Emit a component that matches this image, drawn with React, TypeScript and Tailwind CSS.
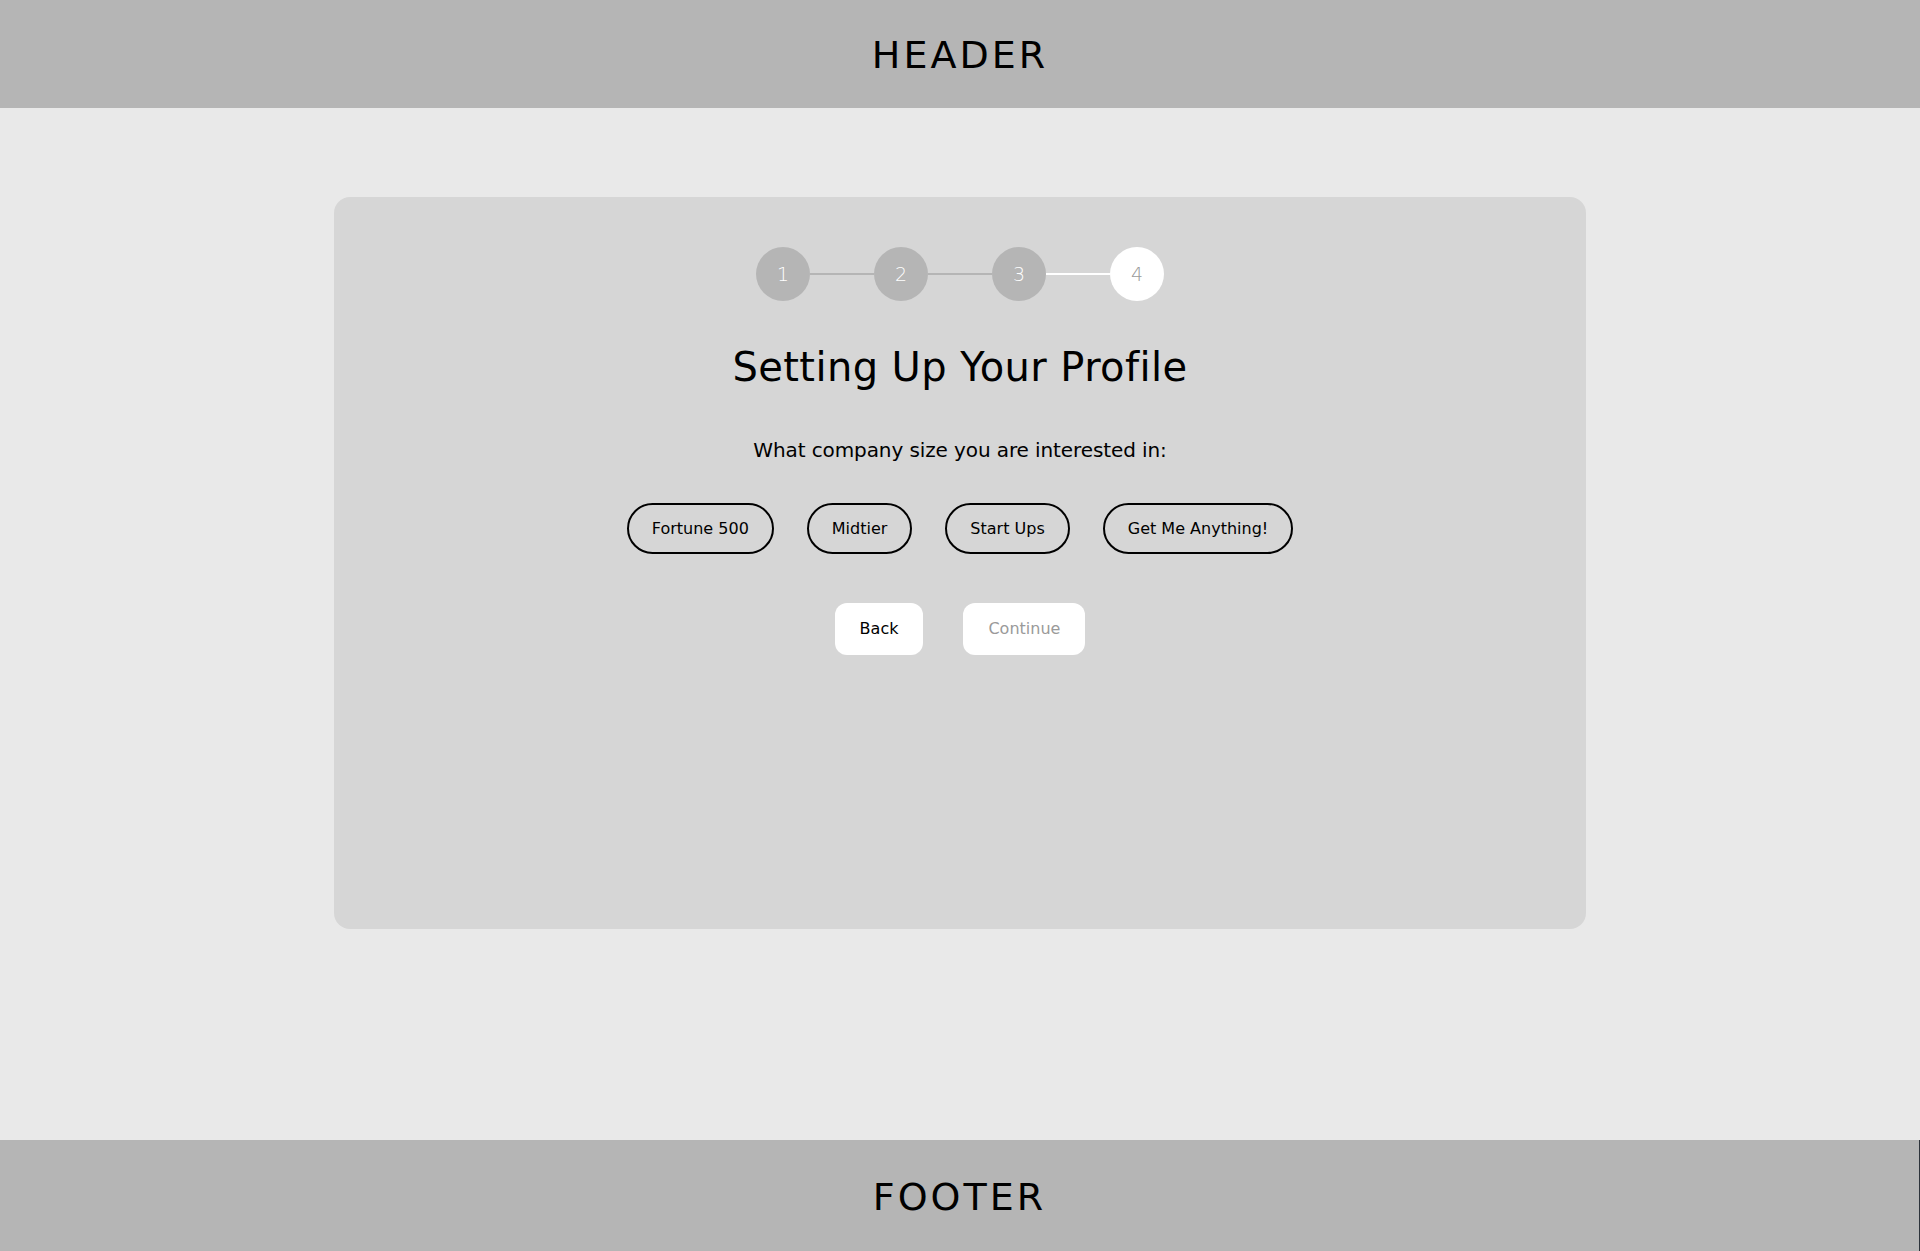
import React from "react";

const font = { fontFamily: '"DejaVu Sans", "Noto Sans", sans-serif' };

function Stepper() {
  const steps = [1, 2, 3, 4];
  return (
    <div className="flex items-center justify-center">
      {steps.map((s, i) => (
        <React.Fragment key={s}>
          {i > 0 && (
            <div className={`h-[2px] w-[64px] ${i === 3 ? "bg-white" : "bg-[#b5b5b5]"}`} />
          )}
          <div
            className={`flex h-[54px] w-[54px] items-center justify-center rounded-full text-[19px] font-light ${
              s === 4 ? "bg-white text-[#9a9a9a]" : "bg-[#b5b5b5] text-white"
            }`}
          >
            {s}
          </div>
        </React.Fragment>
      ))}
    </div>
  );
}

export default function App() {
  const options = ["Fortune 500", "Midtier", "Start Ups", "Get Me Anything!"];
  return (
    <div className="flex min-h-[1251px] flex-col bg-[#e9e9e9] text-black" style={font}>
      <header className="flex h-[108px] items-center justify-center bg-[#b5b5b5] pt-[2px]">
        <h1 className="text-[38px] font-normal leading-none tracking-[3px]">HEADER</h1>
      </header>
      <main className="flex flex-1 justify-center pt-[89px]">
        <section className="flex h-[732px] w-[1252px] flex-col items-center rounded-[16px] bg-[#d6d6d6] pt-[50px]">
          <Stepper />
          <h2 className="mt-[42px] text-[40px] font-normal leading-[48px] tracking-[0.4px]">Setting Up Your Profile</h2>
          <p className="mt-[45px] text-[20px] leading-[28px] tracking-[-0.1px]">What company size you are interested in:</p>
          <div className="mt-[39px] flex gap-[33px]">
            {options.map((o) => (
              <button
                key={o}
                className="h-[51px] rounded-full border-2 border-black px-[23px] pt-[1px] text-[16px] text-black"
              >
                {o}
              </button>
            ))}
          </div>
          <div className="mt-[49px] flex gap-[40px]">
            <button className="h-[52px] rounded-[12px] bg-white px-[25px] text-[16px] text-black">Back</button>
            <button className="h-[52px] rounded-[12px] bg-white px-[25px] text-[16px] text-[#9a9a9a]">Continue</button>
          </div>
        </section>
      </main>
      <footer className="flex h-[111px] items-center justify-center border-r border-[#2d333b] bg-[#b5b5b5] pt-[2px]">
        <span className="text-[38px] font-normal leading-none tracking-[3px]">FOOTER</span>
      </footer>
    </div>
  );
}
